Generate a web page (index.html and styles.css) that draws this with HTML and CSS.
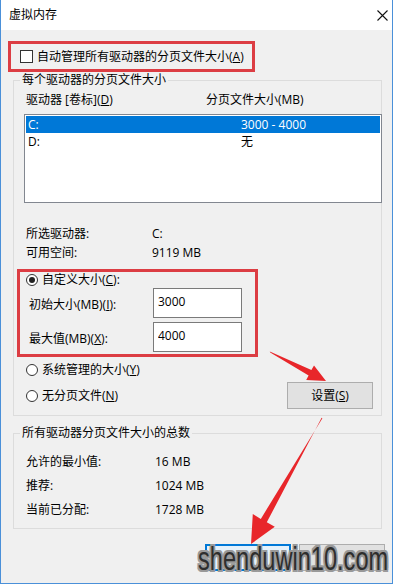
FILE: index.html
```html
<!DOCTYPE html>
<html lang="zh-CN">
<head>
    <meta charset="UTF-8">
    <meta name="viewport" content="width=device-width, initial-scale=1.0">
    <title>虚拟内存</title>
    <link rel="stylesheet" href="styles.css">
</head>
<body>

    <div class="window">
        <!-- 标题栏 -->
        <div class="titlebar">
            <span class="title">虚拟内存</span>
            <svg class="close" width="11" height="11" viewBox="0 0 11 11">
                <path d="M0.5 0.5L10.5 10.5M10.5 0.5L0.5 10.5" stroke="#111" stroke-width="1.1" fill="none"/>
            </svg>
        </div>

        <div class="content">
            <!-- 自动管理 -->
            <label class="mark mark-auto">
                <span class="checkbox"></span>
                <span>自动管理所有驱动器的分页文件大小(<u>A</u>)</span>
            </label>

            <fieldset class="group group-drives">
                <legend>每个驱动器的分页文件大小</legend>
                <div class="group-body">
                    <div class="head">
                        <span>驱动器 [卷标](<u>D</u>)</span>
                        <span>分页文件大小(MB)</span>
                    </div>
                    <ul class="drive-list">
                        <li class="selected"><span>C:</span><span>3000 - 4000</span></li>
                        <li><span>D:</span><span>无</span></li>
                    </ul>

                    <div class="info">
                        <span>所选驱动器:</span><span>C:</span>
                        <span>可用空间:</span><span>9119 MB</span>
                    </div>

                    <!-- 自定义大小 -->
                    <div class="mark mark-custom">
                        <div class="radio-row"><span class="radio checked"></span><span>自定义大小(<u>C</u>):</span></div>
                        <div class="size-row">
                            <span class="size-label">初始大小(MB)(<u>I</u>):</span>
                            <input class="textbox" type="text" value="3000">
                        </div>
                        <div class="size-row">
                            <span class="size-label">最大值(MB)(<u>X</u>):</span>
                            <input class="textbox" type="text" value="4000">
                        </div>
                    </div>

                    <div class="radio-row radio-system"><span class="radio"></span><span>系统管理的大小(<u>Y</u>)</span></div>
                    <div class="bottom-row">
                        <div class="radio-row"><span class="radio"></span><span>无分页文件(<u>N</u>)</span></div>
                        <button class="btn btn-set">设置(<u>S</u>)</button>
                    </div>
                </div>
            </fieldset>

            <fieldset class="group group-total">
                <legend>所有驱动器分页文件大小的总数</legend>
                <div class="totals">
                    <span>允许的最小值:</span><span>16 MB</span>
                    <span>推荐:</span><span>1024 MB</span>
                    <span>当前已分配:</span><span>1728 MB</span>
                </div>
            </fieldset>

            <!-- 确定 / 取消（文字被水印遮住） -->
            <div class="buttons">
                <button class="btn btn-ok" aria-label="确定"></button>
                <button class="btn" aria-label="取消"></button>
            </div>
        </div>

        <!-- 标注箭头 -->
        <svg class="arrows" width="393" height="584" viewBox="0 0 393 584">
            <polygon fill="#e8262a" points="269.8,351.5 311.4,370.0 314.0,365.4 326,381 306.2,380.0 308.6,375.4 270.2,352.5"/>
            <polygon fill="#e8262a" points="321.6,417.8 266.8,522.3 274.8,526.8 251,544 252.8,514 260.8,518.9 322.4,418.2"/>
        </svg>

        <div class="watermark">shenduwin10.com</div>
    </div>

</body>
</html>
```

FILE: styles.css
```css
* {
    box-sizing: border-box;
}
body {
    margin: 0;
    background: #fff;
}
.window {
    position: relative;
    width: 393px;
    height: 584px;
    border: 1px solid #4a90d9;
    border-top: none;
    background: #f0f0f0;
    font-family: "Open Sans", "Noto Sans CJK SC", sans-serif;
    font-size: 12px;
    line-height: 16px;
    color: #000;
    overflow: hidden;
}
u {
    text-underline-offset: 1px;
}
.titlebar {
    height: 30px;
    background: #fff;
    display: flex;
    align-items: center;
    justify-content: space-between;
    padding: 0 4px 0 8px;
}
.close {
    display: block;
}

/* 红色标注框 */
.mark {
    border: 3px solid #dc3d43;
}
.mark-auto {
    display: flex;
    align-items: center;
    gap: 4px;
    width: 247px;
    height: 31px;
    margin: 11px 0 0 7px;
    padding-left: 9px;
}
.checkbox {
    width: 13px;
    height: 13px;
    border: 1px solid #333;
    background: #fff;
}

/* 分组框 */
.group {
    margin: 0 0 0 12px;
    width: 369px;
    padding: 0;
    border: 1px solid #dcdcdc;
    min-width: 0;
}
.group legend {
    margin-left: 6px;
    padding: 0 2px;
    line-height: 16px;
}
.group-drives {
    padding-bottom: 6px;
}
.group-body {
    padding: 4px 0 0 10px;
}
.head {
    display: grid;
    grid-template-columns: 180px 1fr;
    padding-left: 2px;
    margin-bottom: 6px;
}
.drive-list {
    list-style: none;
    margin: 0 -1px 0 0;
    height: 89px;
    padding: 1px;
    border: 1px solid #828790;
    background: #fff;
}
.drive-list li {
    display: grid;
    grid-template-columns: 213px 1fr;
    height: 17px;
    line-height: 17px;
    padding-left: 2px;
}
.drive-list .selected {
    background: #0078d7;
    color: #fff;
}
.info {
    display: grid;
    grid-template-columns: 126px 1fr;
    line-height: 19px;
    margin-top: 21px;
    padding-left: 2px;
}
.mark-custom {
    width: 241px;
    margin: 7px 0 0 -7px;
    padding-bottom: 2px;
}
.radio-row {
    display: flex;
    align-items: center;
    gap: 4px;
    height: 16px;
}
.mark-custom .radio-row {
    padding-left: 6px;
}
.radio {
    position: relative;
    width: 12px;
    height: 12px;
    border: 1px solid #333;
    border-radius: 50%;
    background: #fff;
}
.radio.checked::after {
    content: "";
    position: absolute;
    left: 2px;
    top: 2px;
    width: 6px;
    height: 6px;
    border-radius: 50%;
    background: #222;
}
.size-row {
    display: flex;
    align-items: center;
    height: 30px;
    padding-left: 9px;
}
.size-row + .size-row {
    margin-top: 4px;
}
.size-label {
    width: 124px;
    padding-top: 3px;
}
.textbox {
    width: 89px;
    height: 30px;
    border: 1px solid #7a7a7a;
    background: #fff;
    padding: 0 4px 3px;
    font: inherit;
    color: #000;
    outline: none;
}
.radio-system {
    margin-top: 5px;
    padding-left: 2px;
}
.bottom-row {
    display: flex;
    align-items: center;
    justify-content: space-between;
    margin-top: 4px;
    padding-left: 2px;
}
.btn {
    width: 86px;
    height: 27px;
    border: 1px solid #adadad;
    background: #e1e1e1;
    font: inherit;
    color: #000;
    padding: 0;
}
.btn-set {
    margin-right: 8px;
}
.group-total {
    margin-top: 9px;
    padding-bottom: 6px;
}
.totals {
    display: grid;
    grid-template-columns: 129px 1fr;
    line-height: 24px;
    padding: 9px 0 0 12px;
}
.buttons {
    display: flex;
    justify-content: flex-end;
    gap: 8px;
    margin: 15px 7px 0 0;
}
.btn-ok {
    border: 2px solid #0078d7;
    background: #e5f1fb;
}

/* 标注与水印 */
.arrows {
    position: absolute;
    left: -1px;
    top: 0;
    pointer-events: none;
}
.watermark {
    position: absolute;
    left: 197px;
    top: 542px;
    font-family: "Liberation Sans", sans-serif;
    font-size: 33px;
    line-height: 33px;
    color: #2e2e2e;
    white-space: nowrap;
    transform: scaleX(0.715);
    transform-origin: left top;
    text-shadow: 2px 0 0 #999, -2px 0 0 #999, 0 2px 0 #999, 0 -2px 0 #999,
        2px 2px 0 #999, -2px -2px 0 #999, 2px -2px 0 #999, -2px 2px 0 #999;
}
```
